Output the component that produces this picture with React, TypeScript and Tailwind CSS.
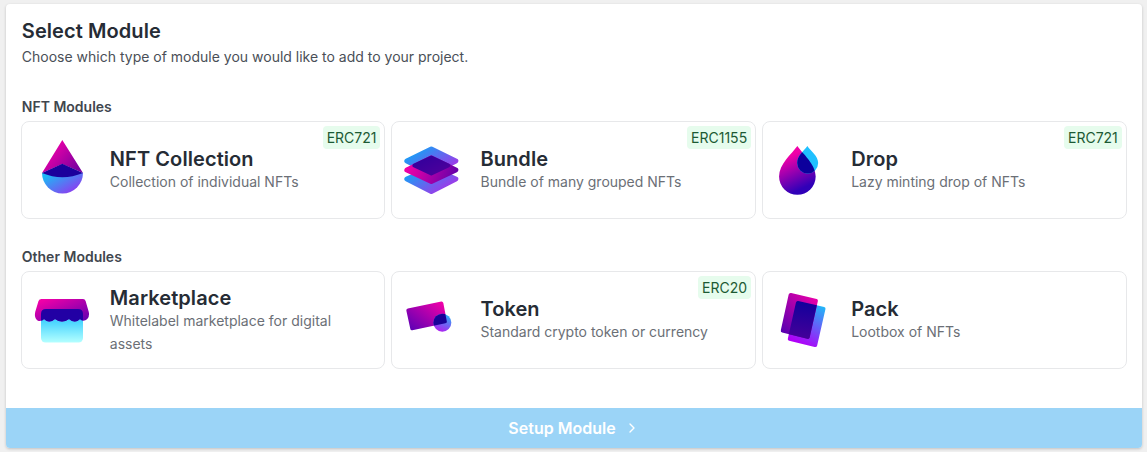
import { ChevronRight } from "lucide-react";
import type { ReactNode } from "react";

function Grad({ id, from, to, x1 = 0, y1 = 0, x2 = 1, y2 = 1 }: { id: string; from: string; to: string; x1?: number; y1?: number; x2?: number; y2?: number }) {
  return (
    <linearGradient id={id} x1={x1} y1={y1} x2={x2} y2={y2}>
      <stop offset="0" stopColor={from} />
      <stop offset="1" stopColor={to} />
    </linearGradient>
  );
}

function CollectionIcon() {
  return (
    <svg width="64" height="64" viewBox="30 138 64 64" className="shrink-0">
      <defs>
        <Grad id="col-a" from="#e800a8" to="#7c00a0" x1={0.2} y1={0.3} x2={0.9} y2={0.8} />
        <Grad id="col-b" from="#1cb8f6" to="#9038f0" x1={0.05} y1={0.2} x2={0.85} y2={0.9} />
      </defs>
      <path d="M42 173 A20.5 20.5 0 0 0 83 173 Z" fill="url(#col-b)" />
      <path d="M62.3 140 L83 173 L62.3 164 L42 173 Z" fill="url(#col-a)" />
      <path d="M42 173 L62.3 163.7 L83 173 Q62.3 181.5 42 173 Z" fill="#1b009c" />
    </svg>
  );
}

function BundleIcon() {
  return (
    <svg width="64" height="64" viewBox="400.67 138 64 64" className="shrink-0">
      <defs>
        <Grad id="bun-a" from="#1c9cf6" to="#a038e8" x1={0.1} y1={0.2} x2={0.9} y2={0.8} />
        <Grad id="bun-b" from="#1c9cf6" to="#a038e8" x1={0.1} y1={0.2} x2={0.9} y2={0.8} />
        <Grad id="bun-c" from="#f000a8" to="#6a00a8" x1={0} y1={0.4} x2={1} y2={0.6} />
        <Grad id="bun-d" from="#30009c" to="#50009c" x1={0} y1={0} x2={1} y2={1} />
      </defs>
      <path d="M432 168 L456.5 179 L432 191.5 L407.5 179 Z" fill="url(#bun-a)" stroke="url(#bun-a)" strokeWidth="5" strokeLinejoin="round" />
      <path d="M432 149 L456.5 161 L432 173.5 L407.5 161 Z" fill="url(#bun-b)" stroke="url(#bun-b)" strokeWidth="5" strokeLinejoin="round" />
      <path d="M432 158 L456.5 170 L432 181.5 L407.5 170 Z" fill="url(#bun-c)" stroke="url(#bun-c)" strokeWidth="5" strokeLinejoin="round" />
      <path d="M432 157.5 L449 165.5 L432 173.5 L415 165.5 Z" fill="url(#bun-d)" stroke="url(#bun-d)" strokeWidth="4" strokeLinejoin="round" />
    </svg>
  );
}

function DropIcon() {
  const big = "M797.7 146 C803 154 816 164 816 176.5 A18.3 18.3 0 0 1 779.4 176.5 C779.4 164 792 154 797.7 146 Z";
  const small = "M807.7 146 C811 151 818.5 156 818.5 163 A10.5 10.5 0 0 1 797.5 163 C797.5 156 804 151 807.7 146 Z";
  return (
    <svg width="64" height="64" viewBox="771.33 138 64 64" className="shrink-0">
      <defs>
        <Grad id="drop-a" from="#f000a8" to="#3000b8" x1={0.3} y1={0.2} x2={0.55} y2={0.9} />
        <clipPath id="drop-clip">
          <path d={big} />
        </clipPath>
      </defs>
      <path d={big} fill="url(#drop-a)" />
      <path d={small} fill="#20c0ff" />
      <path d={small} fill="#0c009c" clipPath="url(#drop-clip)" />
    </svg>
  );
}

function MarketplaceIcon() {
  return (
    <svg width="64" height="64" viewBox="30 288 64 64" className="shrink-0">
      <defs>
        <Grad id="mar-a" from="#f000a8" to="#6c00b0" x1={0.1} y1={0.1} x2={0.9} y2={0.9} />
        <Grad id="mar-b" from="#3cd0ff" to="#b4ffff" x1={0} y1={0.3} x2={0} y2={1} />
      </defs>
      <rect x="41" y="309" width="42" height="33.5" rx="4.5" fill="url(#mar-b)" />
      <path
        d="M41.5 299 H83 Q85 299 85.6 301 L88.8 312 Q90 317 86 320 Q82 322 80 319 Q75 324 69 319 Q62 324 55 319 Q49 324 44 319 Q41 322 37.5 320.5 Q34 318 35.2 312 L38.5 301 Q39.2 299 41.5 299 Z"
        fill="url(#mar-a)"
      />
      <path
        d="M46 309 H78 Q83 309 83 314 V320 Q82 321 80 319 Q75 324 69 319 Q62 324 55 319 Q49 324 44 319 Q42.5 321 41 320.5 V314 Q41 309 46 309 Z"
        fill="#2200a4"
      />
    </svg>
  );
}

function TokenIcon() {
  const card = "M408.5 308.5 L442 301.5 Q443.5 301.3 444 303 L447.5 321.5 Q447.8 323 446 323.3 L413 330.2 Q411.3 330.5 411 329 L407 310.5 Q406.8 309 408.5 308.5 Z";
  return (
    <svg width="64" height="64" viewBox="400.67 288 64 64" className="shrink-0">
      <defs>
        <Grad id="tok-a" from="#f000a8" to="#6400b4" x1={0.95} y1={0.1} x2={0.1} y2={0.9} />
        <Grad id="tok-b" from="#20b8f8" to="#b020f0" x1={0.8} y1={0} x2={0.4} y2={1} />
        <clipPath id="tok-clip">
          <path d={card} />
        </clipPath>
      </defs>
      <path d={card} fill="url(#tok-a)" />
      <circle cx="443" cy="322.7" r="9" fill="url(#tok-b)" />
      <circle cx="443" cy="322.7" r="9" fill="#1a0098" clipPath="url(#tok-clip)" />
    </svg>
  );
}

function PackIcon() {
  const front = "M791.5 293 L817 299 Q818.6 299.5 818.2 301 L810 337.5 Q809.5 339.2 807.5 338.8 L782.5 332.5 Q780.7 332 781.2 330 L789 294.5 Q789.5 292.6 791.5 293 Z";
  const back = "M798.5 301 L824.5 307 Q826.2 307.5 825.8 309 L817.5 345.5 Q817 347.5 815 347 L789.5 340.8 Q787.7 340.2 788.2 338.4 L796.3 302.5 Q796.8 300.6 798.5 301 Z";
  return (
    <svg width="64" height="64" viewBox="771.33 288 64 64" className="shrink-0">
      <defs>
        <Grad id="pac-a" from="#f000a8" to="#5800b0" x1={0.9} y1={0} x2={0.1} y2={0.9} />
        <Grad id="pac-b" from="#20b8f8" to="#b000f8" x1={0.9} y1={0.1} x2={0.5} y2={1} />
        <Grad id="pac-c" from="#10009c" to="#500098" x1={0.6} y1={0} x2={0.5} y2={1} />
        <clipPath id="pac-clip">
          <path d={front} />
        </clipPath>
      </defs>
      <path d={back} fill="url(#pac-b)" />
      <path d={front} fill="url(#pac-a)" />
      <path d={back} fill="url(#pac-c)" clipPath="url(#pac-clip)" />
    </svg>
  );
}

function ModuleCard({ icon, title, description, badge }: { icon: ReactNode; title: string; description: string; badge?: string }) {
  return (
    <div className="relative flex h-[98px] items-center gap-4 rounded-lg border border-[#e7e8ea] bg-white pr-4 pl-2">
      {badge && (
        <span className="absolute top-1 right-1 rounded-sm bg-[#e6fced] px-1 text-sm leading-[23px] text-[#1c5a34]">
          {badge}
        </span>
      )}
      {icon}
      <div>
        <h3 className="pt-[2px] text-xl leading-[21px] font-semibold tracking-[0.08px] text-[#262c35]">{title}</h3>
        <p className="text-sm leading-[23px] text-[#6b6f76]">{description}</p>
      </div>
    </div>
  );
}

export default function App() {
  return (
    <div className="h-[452px] bg-[#f0f0f0] pt-1 pr-[5px] pl-1.5 font-['Inter',sans-serif]">
      <div className="flex h-[444px] flex-col overflow-hidden rounded-[4px] bg-white shadow-[0_1px_3px_rgba(0,0,0,0.2)]">
        <div className="flex-1 pt-[13px] pr-[15.2px] pl-[14.8px]">
          <h2 className="pl-px text-xl leading-7 font-semibold tracking-[0.08px] text-[#262c35]">Select Module</h2>
          <p className="pl-px text-sm leading-6 text-[#4a4f57]">
            Choose which type of module you would like to add to your project.
          </p>

          <h4 className="mt-7 mb-1 pl-px text-sm leading-5 font-semibold text-[#41464e]">NFT Modules</h4>
          <div className="grid grid-cols-3 gap-1.5">
            <ModuleCard icon={<CollectionIcon />} title="NFT Collection" description="Collection of individual NFTs" badge="ERC721" />
            <ModuleCard icon={<BundleIcon />} title="Bundle" description="Bundle of many grouped NFTs" badge="ERC1155" />
            <ModuleCard icon={<DropIcon />} title="Drop" description="Lazy minting drop of NFTs" badge="ERC721" />
          </div>

          <h4 className="mt-7 mb-1 pl-px text-sm leading-5 font-semibold text-[#41464e]">Other Modules</h4>
          <div className="grid grid-cols-3 gap-1.5">
            <ModuleCard icon={<MarketplaceIcon />} title="Marketplace" description="Whitelabel marketplace for digital assets" />
            <ModuleCard icon={<TokenIcon />} title="Token" description="Standard crypto token or currency" badge="ERC20" />
            <ModuleCard icon={<PackIcon />} title="Pack" description="Lootbox of NFTs" />
          </div>
        </div>

        <button className="flex h-10 shrink-0 items-center justify-center gap-2 bg-[#9bd4f7] text-base font-semibold text-white">
          Setup Module
          <ChevronRight size={16} strokeWidth={2} />
        </button>
      </div>
    </div>
  );
}
